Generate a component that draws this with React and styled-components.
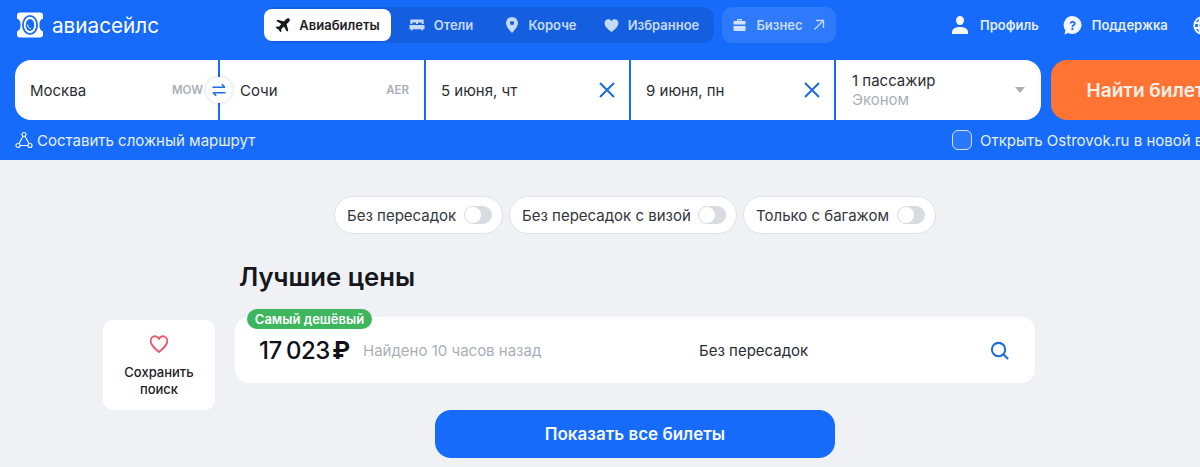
import React from "react";
import styled, { createGlobalStyle } from "styled-components";

const Global = createGlobalStyle`
  html, body { margin: 0; padding: 0; background: #eff1f4; overflow: hidden; }
  body { font-family: Inter, "Noto Sans", sans-serif; color: #1d2026; }
  #root { width: 1200px; height: 467px; overflow: hidden; }
`;

const Page = styled.div`
  width: 1200px;
  height: 467px;
  overflow: hidden;
  background: #eff1f4;
`;
const Header = styled.header`
  height: 160px;
  background: #166bfb;
  padding-left: 15px;
  display: flex;
  flex-direction: column;
  width: 1300px;
  box-sizing: border-box;
`;
const TopBar = styled.div`
  height: 60px;
  display: flex;
  align-items: flex-start;
`;
const Brand = styled.div`
  display: flex;
  align-items: center;
  gap: 9px;
  width: 249px;
  height: 50px;
  padding-left: 2px;
  box-sizing: border-box;
  color: #fff;
  font-size: 20.7px;
  font-weight: 400;
`;
const Tabs = styled.nav`
  margin-top: 7px;
  width: 450px;
  height: 36px;
  box-sizing: border-box;
  padding: 2px 0;
  background: #145fe0;
  border-radius: 10px;
  display: flex;
`;
const Tab = styled.a`
  display: flex;
  align-items: center;
  justify-content: center;
  gap: ${(p) => p.$gap || 9}px;
  height: 32px;
  width: ${(p) => p.$w}px;
  box-sizing: border-box;
  border-radius: 8px;
  font-size: 13px;
  font-weight: 600;
  background: ${(p) => (p.$active ? "#fff" : "transparent")};
  color: ${(p) => (p.$active ? "#1d2026" : "#c7dafc")};
  & svg { flex: none; }
`;
const BusinessLink = styled.a`
  margin-left: 8px;
  margin-top: 7px;
  width: 114px;
  height: 36px;
  border-radius: 10px;
  background: #2e7afb;
  color: #c7dafc;
  font-size: 13px;
  font-weight: 600;
  display: flex;
  align-items: center;
  justify-content: center;
  gap: 10px;
`;
const UserMenu = styled.div`
  margin-left: 116px;
  height: 50px;
  display: flex;
  align-items: center;
  color: #e4eefe;
  font-size: 13px;
  font-weight: 600;
`;
const MenuItem = styled.a`
  display: flex;
  align-items: center;
  gap: ${(p) => p.$gap || 9}px;
  margin-right: ${(p) => p.$mr || 0}px;
  white-space: nowrap;
`;
const SearchRow = styled.div`
  display: flex;
  height: 60px;
`;
const FieldGroup = styled.div`
  display: flex;
  gap: 2px;
  position: relative;
`;
const Field = styled.div`
  width: ${(p) => p.$w}px;
  height: 60px;
  box-sizing: border-box;
  background: #fff;
  display: flex;
  align-items: center;
  justify-content: space-between;
  padding: 0 ${(p) => p.$pr || 14}px 0 ${(p) => p.$pl || 15}px;
  font-size: 15px;
  color: #2a2d33;
  border-radius: ${(p) => p.$radius || "0"};
`;
const Code = styled.span`
  font-size: 11.5px;
  font-weight: 600;
  color: #a9afb8;
`;
const ClearIcon = styled.svg`
  width: 16px;
  height: 16px;
  stroke: #1f6ce0;
  stroke-width: 2;
  fill: none;
`;
const Swap = styled.div`
  position: absolute;
  left: 191px;
  top: 17px;
  width: 26px;
  height: 26px;
  border-radius: 50%;
  background: #fff;
  box-shadow: 0 0 4px rgba(20, 40, 80, 0.2);
  display: flex;
  align-items: center;
  justify-content: center;
`;
const Passengers = styled.div`
  display: flex;
  flex-direction: column;
  line-height: 19px;
  font-size: 15px;
`;
const Muted = styled.span`
  color: #a9afb8;
`;
const Caret = styled.span`
  width: 0;
  height: 0;
  border-left: 5.5px solid transparent;
  border-right: 5.5px solid transparent;
  border-top: 6px solid #a9afb8;
  margin-right: 2px;
`;
const FindButton = styled.button`
  margin-left: 10px;
  width: 204px;
  height: 60px;
  border: 0;
  border-radius: 16px;
  background: #ff7433;
  color: #f8f0ea;
  font: 600 19px Inter, sans-serif;
  white-space: nowrap;
  padding: 0;
`;
const SubRow = styled.div`
  height: 40px;
  display: flex;
  align-items: center;
  color: #e6effe;
  font-size: 15px;
`;
const RouteLink = styled.a`
  display: flex;
  align-items: center;
  gap: 4px;
  width: 937px;
`;
const CheckLabel = styled.label`
  display: flex;
  align-items: center;
  gap: 8px;
  white-space: nowrap;
`;
const CheckBox = styled.span`
  width: 18px;
  height: 18px;
  border: 1px solid #d5e3fd;
  border-radius: 6px;
  background: #2a78fb;
`;
const Main = styled.main`
  display: flex;
  flex-direction: column;
`;
const Filters = styled.div`
  margin: 36px 0 0 334px;
  display: flex;
  gap: 6px;
`;
const Pill = styled.div`
  height: 38px;
  box-sizing: border-box;
  width: ${(p) => p.$w}px;
  padding: 0 10px 0 12px;
  border: 1px solid #dfe2e8;
  border-radius: 19px;
  background: #fff;
  display: flex;
  align-items: center;
  justify-content: space-between;
  font-size: 15px;
  color: #33363c;
  white-space: nowrap;
`;
const Toggle = styled.span`
  width: 28px;
  height: 18px;
  border-radius: 9px;
  background: #d8dbe0;
  position: relative;
  flex: none;
  &::before {
    content: "";
    position: absolute;
    left: 1px;
    top: 1px;
    width: 16px;
    height: 16px;
    border-radius: 50%;
    background: #fff;
  }
`;
const Results = styled.div`
  display: flex;
  padding-left: 103px;
  gap: 20px;
  margin-top: 26px;
`;
const SaveCard = styled.button`
  margin-top: 60px;
  width: 112px;
  height: 90px;
  border: 0;
  border-radius: 10px;
  background: #fff;
  display: flex;
  flex-direction: column;
  align-items: center;
  padding: 14px 0 0;
  font: 500 13px/17px Inter, sans-serif;
  color: #1d2026;
  gap: 10px;
`;
const Column = styled.div`
  width: 800px;
  display: flex;
  flex-direction: column;
`;
const Title = styled.h2`
  margin: 0 0 0 4px;
  font-size: 25.7px;
  line-height: 34px;
  font-weight: 600;
  color: #14171c;
`;
const Ticket = styled.div`
  margin-top: 23px;
  height: 66px;
  box-sizing: border-box;
  background: #fff;
  border-radius: 14px;
  position: relative;
  display: flex;
  align-items: center;
  padding: 0 26px 0 24px;
`;
const Badge = styled.span`
  position: absolute;
  left: 12px;
  top: -8px;
  width: 125px;
  height: 20px;
  border-radius: 10px;
  background: #3db65e;
  color: #fff;
  font-size: 13px;
  font-weight: 600;
  display: flex;
  align-items: center;
  justify-content: center;
`;
const Price = styled.span`
  font-size: 24px;
  font-weight: 500;
  color: #0e1116;
  width: 104px;
  white-space: nowrap;
  letter-spacing: -0.5px;
  word-spacing: -1.5px;
`;
const Ruble = styled.span`
  font-weight: 700;
  margin-left: -2px;
`;
const Found = styled.span`
  font-size: 15px;
  color: #a9afb8;
  width: 336px;
`;
const Stops = styled.span`
  font-size: 15px;
  color: #2a2d33;
  flex: 1;
`;
const ShowAll = styled.button`
  margin: 27px 0 0 200px;
  width: 400px;
  height: 48px;
  border: 0;
  border-radius: 16px;
  background: #166bfb;
  color: #f5f8ff;
  font: 600 17px Inter, sans-serif;
`;

const Logo = () => (
  <svg width="26" height="26" viewBox="0 0 26 26">
    <path fill="#fff" d="M3 .5h20a3 3 0 0 1 3 3v3c-2.600 1-3.600 3-3.600 6.500s1 5.500 3.600 6.500v3a3 3 0 0 1-3 3H3a3 3 0 0 1-3-3v-3c2.600-1 3.600-3 3.600-6.500S2.600 7.500 0 6.500v-3a3 3 0 0 1 3-3z" />
    <ellipse cx="13" cy="13" rx="8" ry="10" fill="#166bfb" />
    <ellipse cx="13" cy="13" rx="6.200" ry="8.200" fill="#fff" />
    <ellipse cx="13" cy="13" rx="4.300" ry="6" fill="#166bfb" />
    <path d="M10.700 12.500c0 2.500 1.200 4 3.300 4.300" fill="none" stroke="#fff" strokeWidth="1" />
  </svg>
);
const PlaneIcon = () => (
  <svg width="16" height="16" viewBox="0 0 24 24" fill="#15181d">
    <path d="M21.500 2.500c-1.200-1.200-3.200-.9-4.600.5l-3.600 3.700L4 4 2 6l7.600 4.600-3.800 4.200-3-.5L1 16l4.300 2.700L8 23l1.700-1.800-.5-3 4.200-3.800L18 22l2-2-2.700-9.300 3.700-3.600c1.400-1.400 1.700-3.400.5-4.600z" />
  </svg>
);
const BedIcon = () => (
  <svg width="16" height="16" viewBox="0 0 16 16" fill="#c7dafc">
    <path d="M2 2.500h12a.7.7 0 0 1 .7.7V7h-2V5.500H9V7H7V5.500H3.300V7h-2V3.200A.7.7 0 0 1 2 2.500z" />
    <path d="M.5 8h15v4.200h-1.500v1.300h-1.500v-1.300h-9v1.300H2V12.200H.5z" />
  </svg>
);
const PinIcon = () => (
  <svg width="14" height="16" viewBox="0 0 14 16">
    <path fill="#c7dafc" fillRule="evenodd" d="M7 0a6 6 0 0 1 6 6.100c0 3.700-3.600 7.300-6 9.900-2.400-2.600-6-6.200-6-9.900A6 6 0 0 1 7 0zm0 4a2.100 2.100 0 1 0 0 4.200A2.100 2.100 0 0 0 7 4z" />
  </svg>
);
const HeartFill = () => (
  <svg width="15" height="15" viewBox="0 0 24 24" fill="#c7dafc">
    <path d="M12 22.500C6 17.500 1 13.500 1 8.200 1 4.500 3.700 2 6.800 2c2.100 0 4 1 5.200 3 1.200-2 3.100-3 5.200-3C20.300 2 23 4.500 23 8.200c0 5.300-5 9.300-11 14.300z" />
  </svg>
);
const CaseIcon = () => (
  <svg width="13" height="14" viewBox="0 0 13 14" fill="#d4e3fd">
    <path fillRule="evenodd" d="M4 3V1.800c0-.5.400-.8.800-.8h3.400c.4 0 .8.300.8.800V3h3.500v3.500H.5V3zm1.200 0h2.600V2.200H5.200z" />
    <path d="M.5 8h12v4.200c0 .5-.4.8-.8.800H1.300c-.4 0-.8-.3-.8-.8z" />
  </svg>
);
const OutArrow = () => (
  <svg width="12" height="12" viewBox="0 0 12 12" fill="none" stroke="#c7dafc" strokeWidth="1.300">
    <path d="M1.500 10.500L10.500 1.500M3 1.500h7.500V9" />
  </svg>
);
const UserIcon = () => (
  <svg width="16" height="18" viewBox="0 0 16 18" fill="#f3f7ff">
    <path d="M8 0c2.300 0 4 1.800 4 4.400C12 7 10.300 9 8 9S4 7 4 4.400C4 1.800 5.700 0 8 0z" />
    <path d="M0 18v-2.300C0 12.700 3.500 11 8 11s8 1.700 8 4.700V18z" />
  </svg>
);
const HelpIcon = () => (
  <svg width="19" height="19" viewBox="0 0 19 19">
    <path fill="#f3f7ff" d="M9.500 0a9 9 0 0 1 0 18c-1.500 0-3-.4-4.200-1L1.500 18.500 2.400 14.300A9 9 0 0 1 9.500 0z" />
    <text x="9.500" y="13.500" textAnchor="middle" fontSize="12" fontWeight="700" fontFamily="Inter, sans-serif" fill="#166bfb">?</text>
  </svg>
);
const GlobeIcon = () => (
  <svg width="19" height="19" viewBox="0 0 19 19" fill="none" stroke="#f3f7ff" strokeWidth="1.800">
    <circle cx="9.500" cy="9.500" r="8.300" />
    <ellipse cx="9.500" cy="9.500" rx="3.800" ry="8.300" />
    <path d="M1.500 7h16M1.500 12h16" />
  </svg>
);
const SwapIcon = () => (
  <svg width="14" height="14" viewBox="0 0 14 14" fill="none" stroke="#1f6ce0" strokeWidth="1.600">
    <path d="M0.500 4.300h12.500M9.800 1.200l3.200 3.100M13.500 9.700H1M4.200 12.800L1 9.700" />
  </svg>
);
const RouteIcon = () => (
  <svg width="18" height="18" viewBox="0 0 18 18" fill="none" stroke="#eef4ff" strokeWidth="1.200">
    <circle cx="9" cy="3.500" r="2" />
    <circle cx="3" cy="14.500" r="2" />
    <circle cx="15" cy="14.500" r="2" />
    <path d="M8 5.300L4 12.700M10 5.300l4 7.400M5 14.500h8" />
  </svg>
);
const HeartOutline = () => (
  <svg width="20" height="20" viewBox="0 0 24 24" fill="none" stroke="#ea5770" strokeWidth="2.200">
    <path d="M12 21.500C6.500 17 2 13.300 2 8.300 2 5 4.400 2.700 7.200 2.700c2 0 3.700 1 4.800 3 1.100-2 2.800-3 4.800-3C19.600 2.700 22 5 22 8.300c0 5-4.500 8.700-10 13.200z" />
  </svg>
);
const SearchIcon = () => (
  <svg width="19" height="19" viewBox="0 0 20 20" fill="none" stroke="#1f6ce0" strokeWidth="2.200">
    <circle cx="9" cy="9" r="7" />
    <path d="M14 14L19 19" />
  </svg>
);
const Cross = () => (
  <ClearIcon viewBox="0 0 16 16">
    <path d="M1 1l14 14M15 1L1 15" />
  </ClearIcon>
);

export default function App() {
  return (
    <Page>
      <Global />
      <Header>
        <TopBar>
          <Brand>
            <Logo />
            авиасейлс
          </Brand>
          <Tabs>
            <Tab $active $w={127} $gap={8}><PlaneIcon />Авиабилеты</Tab>
            <Tab $w={100}><BedIcon />Отели</Tab>
            <Tab $w={100}><PinIcon />Короче</Tab>
            <Tab $w={121}><HeartFill />Избранное</Tab>
          </Tabs>
          <BusinessLink><CaseIcon />Бизнес<OutArrow /></BusinessLink>
          <UserMenu>
            <MenuItem $mr={24} $gap={12}><UserIcon />Профиль</MenuItem>
            <MenuItem $mr={25} $gap={10}><HelpIcon />Поддержка</MenuItem>
            <MenuItem><GlobeIcon /></MenuItem>
          </UserMenu>
        </TopBar>
        <SearchRow>
          <FieldGroup>
            <Field $w={203} $pr={15} $radius="16px 0 0 16px">Москва<Code>MOW</Code></Field>
            <Field $w={204} $pl={20} $pr={15}>Сочи<Code>AER</Code></Field>
            <Swap><SwapIcon /></Swap>
            <Field $w={203}>5 июня, чт<Cross /></Field>
            <Field $w={203}>9 июня, пн<Cross /></Field>
            <Field $w={205} $pl={16} $pr={14} $radius="0 16px 16px 0">
              <Passengers>1 пассажир<Muted>Эконом</Muted></Passengers>
              <Caret />
            </Field>
          </FieldGroup>
          <FindButton>Найти билеты</FindButton>
        </SearchRow>
        <SubRow>
          <RouteLink><RouteIcon />Составить сложный маршрут</RouteLink>
          <CheckLabel><CheckBox />Открыть Ostrovok.ru в новой вкладке</CheckLabel>
        </SubRow>
      </Header>
      <Main>
        <Filters>
          <Pill $w={169}>Без пересадок<Toggle /></Pill>
          <Pill $w={228}>Без пересадок с визой<Toggle /></Pill>
          <Pill $w={193}>Только с багажом<Toggle /></Pill>
        </Filters>
        <Results>
          <SaveCard><HeartOutline /><span>Сохранить<br />поиск</span></SaveCard>
          <Column>
            <Title>Лучшие цены</Title>
            <Ticket>
              <Badge>Самый дешёвый</Badge>
              <Price>17 023 <Ruble>₽</Ruble></Price>
              <Found>Найдено 10 часов назад</Found>
              <Stops>Без пересадок</Stops>
              <SearchIcon />
            </Ticket>
            <ShowAll>Показать все билеты</ShowAll>
          </Column>
        </Results>
      </Main>
    </Page>
  );
}
